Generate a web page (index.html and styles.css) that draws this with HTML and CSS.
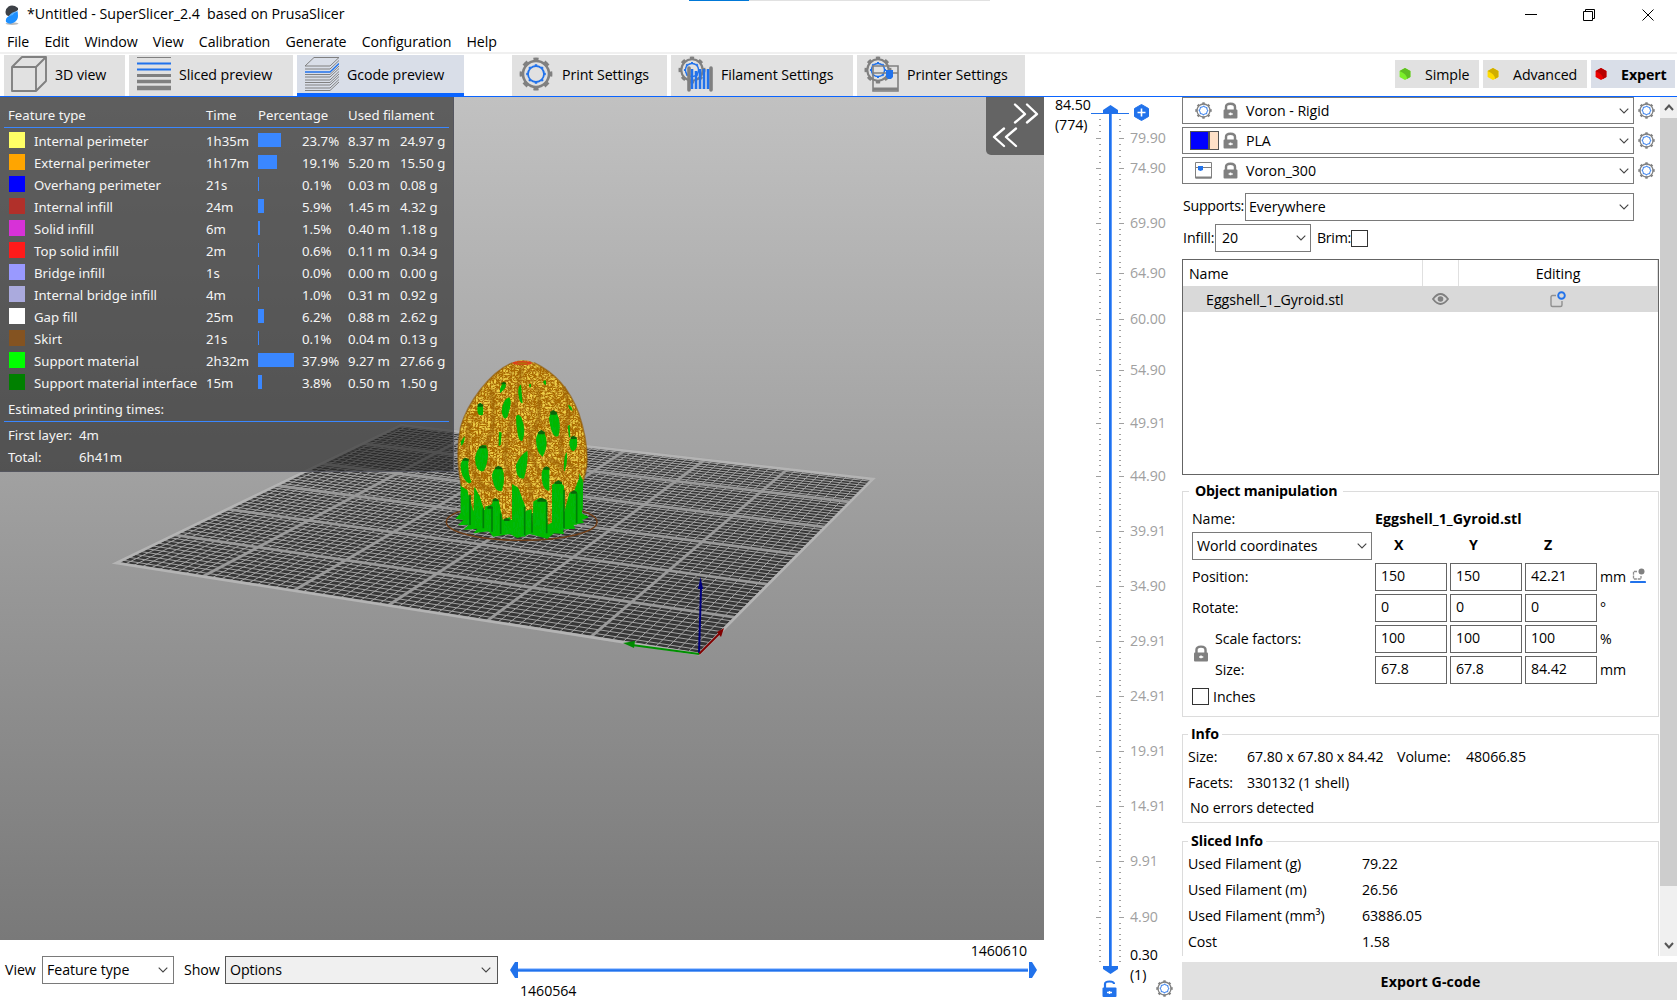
FILE: index.html
```html
<!DOCTYPE html>
<html lang="en">
<head>
<meta charset="utf-8">
<title>*Untitled - SuperSlicer_2.4 based on PrusaSlicer</title>
<link rel="stylesheet" href="styles.css">
</head>
<body>
<svg class="defs" aria-hidden="true">
  <symbol id="gear" viewBox="0 0 34 34">
    <circle cx="17" cy="17" r="13" fill="none" stroke="#808080" stroke-width="2.6"/>
    <circle cx="17" cy="17" r="14.4" fill="none" stroke="#808080" stroke-width="4" pathLength="16" stroke-dasharray="0.9 1.1" stroke-dashoffset="0.45"/>
    <circle cx="17" cy="17" r="8" fill="none" stroke="#2172eb" stroke-width="1.8"/>
    <circle cx="17" cy="17" r="9" fill="none" stroke="#2172eb" stroke-width="1.6" pathLength="16" stroke-dasharray="0.7 1.3" stroke-dashoffset="0.35"/>
  </symbol>
  <symbol id="lock" viewBox="0 0 16 18">
    <path d="M3.2 9V5.2Q3.2 1.7 8 1.7T12.8 5.2V9" fill="none" stroke="#808080" stroke-width="2.6"/>
    <rect x="0.6" y="8" width="14.8" height="9.4" rx="1" fill="#808080"/>
    <path d="M6 12.6h4.4M8 11v3" stroke="#fff" stroke-width="1.6"/>
  </symbol>
  <symbol id="chev" viewBox="0 0 10 6"><path d="M.7.7 5 5 9.3.7" fill="none" stroke="#444" stroke-width="1.1"/></symbol>
</svg>

<header class="titlebar">
  <svg class="logo" width="14" height="20" viewBox="0 0 14 20"><ellipse cx="7" cy="18.6" rx="6.5" ry="1.3" fill="#bbb"/><path d="M13 3Q8-1 3.500 1.500Q0 4 .6 8Q1 11 4 11L13 5Z" fill="#3d4147"/><path d="M12.500 6 4 11Q0 13 1 17Q5 20 9 17.500Q13 15 13 11Q13 8 12.500 6Z" fill="#1e90ff"/><path d="M4 11Q6 7 12.500 6Q8 7 8 10Z" fill="#55b0ff"/></svg>
  <span class="title">*Untitled - SuperSlicer_2.4&nbsp; based on PrusaSlicer</span>
  <div class="progress"><i></i></div>
  <svg class="winbtns" width="130" height="14" viewBox="0 0 130 14" fill="none" stroke="#000" stroke-width="1"><path d="M0 6.500h12M58.500 3.500h9v9h-9zM60.500 3.500v-2h9v9h-2M117.500 1.500l11 11m0-11-11 11"/></svg>
</header>
<nav class="menu"><span>File</span><span>Edit</span><span>Window</span><span>View</span><span>Calibration</span><span>Generate</span><span>Configuration</span><span>Help</span></nav>
<div class="tabs">
  <div class="tab t1"><svg width="36" height="36" viewBox="0 0 36 36" fill="none" stroke="#808080" stroke-width="1.900" stroke-linejoin="round"><path d="M1 11h24v24H1zM1 11 11 1h24L25 11M35 1v24L25 35"/></svg>3D view</div>
  <div class="tab t2"><svg width="34" height="36" viewBox="0 0 34 36"><path d="M0 1.500h34" stroke="#808080"/><path d="M0 7.500h34M0 13.500h34" stroke="#2172eb" stroke-width="2.200"/><path d="M0 19.500h34" stroke="#808080" stroke-width="3"/><path d="M0 25.500h34" stroke="#808080" stroke-width="3.600"/><path d="M0 32h34" stroke="#808080" stroke-width="4.500"/></svg>Sliced preview</div>
  <div class="tab t3 on"><svg width="34" height="36" viewBox="0 0 34 36" fill="none" stroke="#808080" stroke-width="1"><path d="M0 10h25L34 1.500H9z"/><path d="M0 13h25l9-8.500M0 18.500h25l9-8.500M0 21h25l9-8.500M0 24h25l9-8.500M0 26.500h25l9-8.500M0 29h25l9-8.500M0 32h25l9-8.500M0 34.500h25l9-8.500"/><path d="M0 16h25l9-8.500" stroke="#2172eb" stroke-width="1.300"/></svg>Gcode preview</div>
  <div class="tab t4"><svg width="34" height="34"><use href="#gear"/></svg>Print Settings</div>
  <div class="tab t5"><svg width="36" height="36" viewBox="0 0 36 36"><use href="#gear" width="28" height="28"/><path d="M11 12v22M33 12v22" stroke="#808080" stroke-width="3.600" stroke-linecap="round"/><path d="M14 13v20M18 15v18M22 13v20M26 13v20M30 13v20" stroke="#2172eb" stroke-width="2.600"/></svg>Filament Settings</div>
  <div class="tab t6"><svg width="36" height="36" viewBox="0 0 36 36"><use href="#gear" width="28" height="28"/><g fill="none" stroke="#808080" stroke-width="1.600"><path d="M9 10h25v25H9zM9 17h25"/><path d="M9 33h25" stroke-width="3"/></g><path d="M22 14h7v7l-2 2h-3l-2-2z" fill="#2172eb"/></svg>Printer Settings</div>
  <div class="modes">
    <div class="mode m1"><svg width="12" height="12" viewBox="0 0 12 12"><path d="M6 0 11.400 3v6L6 12 .6 9V3z" fill="#7df02a"/><path d="M6 0 11.400 3v6L8 11Q8 6 .6 3z" fill="#5fbf22"/></svg>Simple</div>
    <div class="mode m2"><svg width="12" height="12" viewBox="0 0 12 12"><path d="M6 0 11.400 3v6L6 12 .6 9V3z" fill="#ffdc00"/><path d="M6 0 11.400 3v6L8 11Q8 6 .6 3z" fill="#d0ae00"/></svg>Advanced</div>
    <div class="mode m3"><svg width="12" height="12" viewBox="0 0 12 12"><path d="M6 0 11.400 3v6L6 12 .6 9V3z" fill="#ea0000"/><path d="M6 0 11.400 3v6L8 11Q8 6 .6 3z" fill="#b80000"/></svg>Expert</div>
  </div>
</div>

<main class="work">
  <section class="left">
    <div class="view">
      <svg class="scene" width="1044" height="843" viewBox="0 97 1044 843">
        <defs>
          <filter id="threads" x="0" y="0" width="1" height="1">
            <feTurbulence type="turbulence" baseFrequency="0.11 0.14" numOctaves="2" seed="4"/>
            <feColorMatrix values="0 0 0 0 .86  0 0 0 0 .62  0 0 0 0 .06  2.6 0 0 0 -.35" result="n"/>
            <feComposite in="n" in2="SourceGraphic" operator="in" result="c"/>
            <feMerge><feMergeNode in="SourceGraphic"/><feMergeNode in="c"/></feMerge>
          </filter>
          <filter id="grain" x="0" y="0" width="1" height="1">
            <feTurbulence type="fractalNoise" baseFrequency="0.2 0.05" numOctaves="2" seed="9"/>
            <feColorMatrix values="0 0 0 0 0  0 0 0 0 .48  0 0 0 0 0  3 0 0 0 -1.400" result="n"/>
            <feComposite in="n" in2="SourceGraphic" operator="in" result="c"/>
            <feMerge><feMergeNode in="SourceGraphic"/><feMergeNode in="c"/></feMerge>
          </filter>
        </defs>
        <g id="bed"></g>
        <g transform="translate(430 340) scale(.33333)">
          <ellipse cx="275" cy="546" rx="226" ry="55" fill="none" stroke="#6e3d17" stroke-width="4.500"/>
          <path d="M92 430 92 520 76 536 100 540 84 556 116 554 100 570 142 566 130 580 176 574 190 590 240 582 262 594 300 582 352 596 372 580 402 582 398 568 436 566 430 554 462 548 456 540 476 532 456 520 460 420Z" fill="#00b905" filter="url(#grain)"/>
          <path filter="url(#threads)" fill="#ab6a06" d="M248 68Q278 54 312 68C380 100 420 150 446 220 466 280 474 330 470 380L458 430 448 410 432 455 418 458 402 520 400 440 385 422 368 440 370 545 352 555 350 480 330 474 310 485 308 560 300 520 284 515 262 440 246 435 246 540 236 535 218 540 206 480 195 475 182 498 162 510 150 470 134 440 130 515 112 450 95 440C82 380 80 320 92 262 112 190 180 95 248 68Z"/>
          <g fill="none" stroke="#9c6106" stroke-width="13" opacity=".5"><path d="M275 75Q270 150 240 260T245 420M185 150Q200 260 175 300T185 380M320 140Q340 230 310 270T330 400M120 250Q100 330 135 400T190 440M400 140Q430 220 400 280T440 390M270 400Q300 410 305 480M350 360Q390 360 400 400"/></g>
          <path d="M248 68C180 95 112 190 92 262 80 320 82 380 95 440M312 68C380 100 420 150 446 220 466 280 474 330 470 380L460 425" fill="none" stroke="#8f5a06" stroke-width="5" opacity=".6"/>
          <ellipse cx="277" cy="69" rx="30" ry="6" fill="#d9421a"/><ellipse cx="277" cy="70" rx="16" ry="3.500" fill="#b56a0c"/>
          <g fill="#00b808" filter="url(#grain)">
            <path d="M210 160Q208 138 222 128 232 134 224 146ZM265 160Q264 136 273 134 276 170 278 190 268 190 265 160ZM340 125q4-8 8-2v12q-6 0-8-10ZM298 132h5v10h-5ZM142 208Q142 192 152 190 164 200 158 225 142 230 142 208ZM215 215Q218 176 238 172 248 190 232 230 222 246 215 215ZM258 230Q264 218 274 232 290 270 277 302 262 310 258 230ZM357 235Q362 206 380 218 396 250 385 288 366 300 357 235ZM318 300Q324 262 342 276 360 310 338 350 320 340 318 300ZM418 305Q424 284 440 294 446 325 430 334 418 330 418 305ZM92 305 104 288Q104 310 94 318ZM135 355Q142 315 168 316 182 350 162 392 138 402 135 355ZM92 375Q96 350 116 358 112 400 124 425 116 438 102 415 92 400 92 375ZM186 405Q194 374 216 384 228 410 216 452 192 460 186 405ZM258 375Q270 345 292 332 296 365 282 415 258 420 258 375ZM335 400Q340 376 358 384V452Q334 450 335 400ZM402 390Q400 350 410 336 414 370 404 394ZM207 275 215 278 212 315 206 318ZM413 258l6-4 2 38h-4ZM414 194l10 6 4 14-10-8Z"/>
            <path d="M94 438 112 462 122 515V560L94 530ZM133 440 150 480 158 560H132ZM165 500 185 494 184 575 168 565ZM188 478 205 480 212 580 188 578ZM246 432 266 446 286 500V590L246 582ZM311 485 328 474 348 480 354 585 311 575ZM366 435 384 422 402 438V570L366 580ZM420 458 440 452V555L418 550ZM448 400 458 420V510L444 515ZM288 512 305 508V570H288ZM220 538 240 532 244 580H220Z"/>
          </g>
          <g fill="#0b650b"><path d="M142 194l8-5 10 5-2 6h-14ZM360 216l10-6 12 8-4 6h-16ZM324 277l10-7 12 8-4 5h-18ZM147 321l10-6 12 4v6h-22ZM98 357l8-4 10 4v5H98ZM195 383l10-6 12 6v5h-22ZM340 384l10-5 8 5v5h-18ZM322 480l12-7 14 6v6h-26ZM374 427l12-6 10 6v5h-22ZM422 456l10-5 9 5v5h-19ZM422 292l8-5 10 5v5h-18ZM188 479l8-5 9 5v5h-17ZM172 501l8-4 9 4v5h-17ZM222 538l8-4 9 4v5h-17ZM214 129l8-4 6 4v4h-14Z"/><path d="M120 465v90M160 505v60M186 500v75M212 520v62M284 500v85M306 520v58M350 485v95M402 450v115M440 460v90" stroke="#007d08" stroke-width="5"/></g>
        </g>
        <g stroke-width="2" fill="none"><path d="M699 654 701 588" stroke="#000080"/><path d="M699 654 720 633" stroke="#800000"/><path d="M699 654 632 645" stroke="#009000"/></g>
        <path d="M698 589 700.500 577 703 589Z" fill="#000080"/><path d="M717 632 724 628 721 637Z" fill="#800000"/><path d="M635 641 623 643 634 648Z" fill="#008a00"/>
      </svg>
      <div class="legend">
        <div class="lhead"><span>Feature type</span><span>Time</span><span>Percentage</span><span>Used filament</span></div>
        <div id="rows" class="lrows"></div>
        <div class="lest">Estimated printing times:</div>
        <div class="ltimes"><span>First layer:</span><span>4m</span><span>Total:</span><span>6h41m</span></div>
      </div>
      <div class="collapse"><svg width="54" height="58" viewBox="0 0 54 58" fill="none" stroke="#fff" stroke-width="2.300" stroke-linecap="round" stroke-linejoin="round"><path d="M29 8.500 39 18 29 26.500M41 8.500 51 18 41 26.500M18 32.500 8 41 18 50M30 32.500 20 41 30 50"/></svg></div>
    </div>
    <div class="bottom">
      <span class="lbl v">View</span><div class="select s1">Feature type<svg width="10" height="6"><use href="#chev"/></svg></div>
      <span class="lbl s">Show</span><div class="select s2">Options<svg width="10" height="6"><use href="#chev"/></svg></div>
      <div class="hslider"><span class="hi">1460610</span><svg width="527" height="16" viewBox="0 0 527 16"><path d="M8 6.500h510v3H8z" fill="#5a9aff"/><path d="M8 7.500h510v2H8z" fill="#2172eb"/><path d="M8 0v16H5L0 8 5 0ZM519 0v16h3l5-8-5-8Z" fill="#2172eb"/></svg><span class="lo">1460564</span></div>
    </div>
  </section>

  <section class="vslider">
    <svg width="138" height="903" viewBox="1044 97 138 903">
      <g id="ticks" stroke="#a0a0a0" stroke-width="1"></g>
      <path d="M1109 113h3v853h-3z" fill="#5a9aff"/><path d="M1109 113h2v853h-2z" fill="#2172eb"/>
      <path d="M1091 113.500h38" stroke="#2172eb"/><path d="M1103 113v-3l7.500-5 7.500 5v3ZM1103 966v3l7.500 5 7.500-5v-3Z" fill="#2172eb"/>
      <path d="M1141.500 104.500l7 4v8l-7 4-7-4v-8Z" fill="#2172eb" stroke="#2172eb" stroke-linejoin="round"/><path d="M1137.500 112.500h8M1141.500 108.500v8" stroke="#fff" stroke-width="1.600"/>
      <path d="M1105 988v-4q0-2.500 4.500-2.500t4.500 2.500" fill="none" stroke="#2172eb" stroke-width="2.200"/><rect x="1102.500" y="987.500" width="14" height="9.500" rx="1" fill="#2172eb"/><path d="M1107 992.500h5M1109.500 991v3" stroke="#fff" stroke-width="1.400"/>
      <use href="#gear" x="1156" y="980" width="17" height="17"/>
      <g id="marks" class="marks"></g>
      <g class="ends"><text x="1055" y="110">84.50</text><text x="1055" y="130">(774)</text><text x="1130" y="960">0.30</text><text x="1130" y="980">(1)</text></g>
    </svg>
  </section>

  <aside class="panel">
    <div class="scroll">
      <div class="content">
        <div class="preset"><div class="select"><svg class="pi" width="17" height="17"><use href="#gear"/></svg><svg class="lk" width="15" height="17"><use href="#lock"/></svg>Voron - Rigid<svg width="10" height="6"><use href="#chev"/></svg></div><svg width="17" height="17"><use href="#gear"/></svg></div>
        <div class="preset"><div class="select"><i class="swatches"><b></b></i><svg class="lk" width="15" height="17"><use href="#lock"/></svg>PLA<svg width="10" height="6"><use href="#chev"/></svg></div><svg width="17" height="17"><use href="#gear"/></svg></div>
        <div class="preset"><div class="select"><svg class="pi" width="17" height="17" viewBox="0 0 17 17"><path d="M.5.5h16v15.500H.5zM.5 5.500h16" fill="none" stroke="#808080"/><path d="M.5 15.500h16" stroke="#808080" stroke-width="2"/><path d="M3 4h5v4L5.500 9 3 8z" fill="#2172eb"/></svg><svg class="lk" width="15" height="17"><use href="#lock"/></svg>Voron_300<svg width="10" height="6"><use href="#chev"/></svg></div><svg width="17" height="17"><use href="#gear"/></svg></div>
        <div class="line sup"><span>Supports:</span><div class="select">Everywhere<svg width="10" height="6"><use href="#chev"/></svg></div></div>
        <div class="line inf"><span class="a">Infill:</span><div class="select">20<svg width="10" height="6"><use href="#chev"/></svg></div><span class="b">Brim:</span><i class="check"></i></div>
        <div class="list">
          <div class="lh"><span>Name</span><span></span><span>Editing</span></div>
          <div class="lr"><span>Eggshell_1_Gyroid.stl</span>
            <span><svg width="17" height="12" viewBox="0 0 17 12"><path d="M1 6Q8.500-4 16 6 8.500 16 1 6Z" fill="none" stroke="#808080" stroke-width="1.800"/><circle cx="8.500" cy="6" r="2.800" fill="#808080"/></svg></span>
            <span><svg width="16" height="17" viewBox="0 0 16 17" fill="none"><path d="M6 4.500H2.500q-1.500 0-1.500 1.500v8q0 1.500 1.500 1.500h8q1.500 0 1.500-1.500V10" stroke="#909090" stroke-width="1.400"/><circle cx="11.500" cy="4.500" r="3.300" stroke="#2172eb" stroke-width="1.900"/></svg></span></div>
        </div>
        <fieldset class="obj"><legend>Object manipulation</legend>
          <div class="name"><span>Name:</span><b>Eggshell_1_Gyroid.stl</b></div>
          <div class="coords"><div class="select">World coordinates<svg width="10" height="6"><use href="#chev"/></svg></div><b>X</b><b>Y</b><b>Z</b></div>
          <div class="mrow"><span>Position:</span><i>150</i><i>150</i><i>42.21</i><em>mm</em><svg width="16" height="16" viewBox="0 0 16 16" fill="none"><path d="M7 3.500H3.500V11H11V8" stroke="#909090" stroke-width="1.300" stroke-dasharray="3 .8"/><circle cx="11.500" cy="3.500" r="3" fill="#808080"/><path d="M1 14h14" stroke="#2172eb" stroke-width="2.200" stroke-linecap="round"/></svg></div>
          <div class="mrow"><span>Rotate:</span><i>0</i><i>0</i><i>0</i><em>°</em></div>
          <div class="mrow in"><span>Scale factors:</span><i>100</i><i>100</i><i>100</i><em>%</em></div>
          <div class="mrow in"><span>Size:</span><i>67.8</i><i>67.8</i><i>84.42</i><em>mm</em></div>
          <svg class="sizelock" width="16" height="17"><use href="#lock"/></svg>
          <div class="inches"><i class="check"></i>Inches</div>
        </fieldset>
        <fieldset class="info"><legend>Info</legend>
          <div><span>Size:</span><span>67.80 x 67.80 x 84.42</span><span>Volume:</span><span>48066.85</span></div>
          <div><span>Facets:</span><span>330132 (1 shell)</span></div>
          <p>No errors detected</p>
        </fieldset>
        <fieldset class="sliced"><legend>Sliced Info</legend>
          <div><span>Used Filament (g)</span><span>79.22</span></div>
          <div><span>Used Filament (m)</span><span>26.56</span></div>
          <div><span>Used Filament (mm³)</span><span>63886.05</span></div>
          <div><span>Cost</span><span>1.58</span></div>
        </fieldset>
      </div>
      <div class="sbar"><svg width="10" height="7" viewBox="0 0 10 7"><path d="M1 6 5 1.500 9 6" fill="none" stroke="#555" stroke-width="2"/></svg><i></i><svg width="10" height="7" viewBox="0 0 10 7"><path d="M1 1 5 5.500 9 1" fill="none" stroke="#555" stroke-width="2"/></svg></div>
    </div>
    <div class="export">Export G-code</div>
  </aside>
</main>
<script src="app.js"></script>
</body>
</html>
```
FILE: styles.css
```css
* { box-sizing: border-box; }
body { margin: 0; width: 1677px; height: 1000px; overflow: hidden; background: #fff; color: #000;
  font: 14.2px/20px "Open Sans", "Noto Sans", sans-serif; letter-spacing: -0.07px; display: flex; flex-direction: column; }
i, em { font-style: normal; }
svg { display: block; flex: none; }
.defs { position: absolute; width: 0; height: 0; }
span, b { white-space: nowrap; }

.titlebar { height: 29px; display: flex; align-items: center; padding-left: 5px; position: relative; }
.title { margin-left: 8px; margin-top: -1px; letter-spacing: -0.02px; }
.progress { position: absolute; left: 689px; top: 0; width: 301px; height: 1px; background: #e1e1e1; }
.progress i { display: block; width: 60px; height: 1px; background: #0078d7; }
.winbtns { margin: 0 22px 0 auto; }
.menu { height: 25px; display: flex; border-bottom: 2px solid #f0f0f0; padding: 3px 0 0 7px; gap: 15.2px; }
.tabs { height: 43px; padding: 1px 2px 0 4px; display: flex; border-bottom: 1px solid #0a64ff; }
.tab { height: 41px; background: #e1e1e1; display: flex; align-items: center; padding: 0 0 1px 7px; margin-right: 4px; }
.tab svg { margin: 0 8px 2px 0; }
.t1 { width: 121px; } .t2 { width: 164px; padding-left: 8px; } .t3 { width: 167px; padding-left: 8px; margin-right: 48px; }
.t4 { width: 155px; } .t4 svg { margin-right: 9px; } .t5 { width: 182px; } .t5 svg, .t6 svg { margin-right: 7px; } .t6 { width: 168px; }
.tab.on { background: #d9dee8; box-shadow: inset 0 -3px #0a64ff; }
.modes { margin-left: auto; display: flex; gap: 4px; padding-top: 5px; }
.mode { height: 28px; background: #e1e1e1; display: flex; align-items: center; padding: 1px 0 0 4px; }
.mode svg { margin: 0 14px 1px 0; }
.m1 { width: 84px; } .m2 { width: 104px; } .m3 { width: 84px; background: #d9dee8; font-weight: 700; }

.work { flex: 1; display: flex; min-height: 0; }
.left { width: 1044px; display: flex; flex-direction: column; }
.view { height: 843px; position: relative; background: linear-gradient(#c1c1c1, #797979); }
.legend { position: absolute; left: 0; top: 0; width: 454px; height: 375px; background: rgba(37,37,37,.63); color: #f5f5f5;
  font: 13.2px/22px "Noto Sans", sans-serif; letter-spacing: 0; padding: 7px 4px 0; border-right: 1px solid #55565f; border-bottom: 1px solid #55565f; }
.lhead { display: grid; grid-template-columns: 198px 52px 90px 1fr; padding-left: 4px; height: 24px; border-bottom: 1px solid #3a87ff; }
.lrows { padding: 1px 0 0 5px; }
.lrow { height: 22px; display: grid; grid-template-columns: 25px 172px 52px 44px 46px 52px 1fr; line-height: 24px; }
.sw { width: 16px; height: 16px; margin-top: 3px; }
.bar { height: 14px; margin-top: 4px; background: #3a87ff; }
.lest { height: 24px; margin-top: 5px; padding-left: 4px; border-bottom: 1px solid #3a87ff; }
.ltimes { display: grid; grid-template-columns: 71px 1fr; padding: 2px 0 0 4px; }
.collapse { position: absolute; right: 0; top: 0; width: 58px; height: 58px; background: #646464; border-bottom-left-radius: 5px; }
.collapse svg { margin-top: -1px; }

.select { height: 28px; border: 1px solid #7a7a7a; background: #fff; display: flex; align-items: center; padding: 0 9px 0 4px; white-space: nowrap; }
.select > svg:last-child { margin-left: auto; }
.bottom { flex: 1; display: flex; align-items: center; }
.lbl { margin-top: -1px; }
.v { width: 42px; padding-left: 5px; } .s { width: 51px; padding-left: 10px; }
.s1 { width: 132px; } .s2 { width: 273px; background: #f0f0f0; border-color: #555; padding-right: 6px; }
.s1 { padding-right: 5px; }
.hslider { margin-left: 12px; width: 527px; height: 60px; display: flex; flex-direction: column; padding-top: 1px; }
.hslider svg { margin: 1px 0 3px; }
.hi { align-self: flex-end; margin-right: 10px; }
.lo { margin-left: 10px; }
.vslider { width: 138px; }
.vslider svg { overflow: visible; }
.vslider text { font-size: 14.2px; }
.marks { fill: #a0a0a0; }

.panel { width: 495px; display: flex; flex-direction: column; }
.scroll { height: 859px; display: flex; overflow: hidden; }
.content { width: 478px; padding-right: 1px; }
.preset { display: flex; align-items: center; height: 27px; margin-bottom: 3px; }
.preset .select { width: 452px; height: 27px; margin-right: 4px; padding: 0 4px 0 12px; }
.preset .select > svg:last-child, .sup .select > svg:last-child { margin-right: 0; }
.pi { margin-right: 11px; } .lk { margin-right: 8px; }
.swatches { width: 29px; height: 19px; margin: 0 4px 0 -5px; border: 1px solid #555; background: #ffe1c8; flex: none; }
.swatches b { display: block; width: 19px; height: 17px; background: #00f; border-right: 2px solid #555; }
.line { display: flex; align-items: center; height: 28px; padding-left: 1px; }
.sup { margin-top: 9px; } .sup span { width: 62px; margin-top: -2px; letter-spacing: -.3px; } .sup .select { width: 389px; padding-right: 4px; padding-left: 3px; }
.inf { margin-top: 3px; } .inf .a { width: 32px; margin-top: -1px; } .inf .select { width: 96px; padding: 0 4px 0 6px; }
.inf .b { width: 40px; padding-left: 6px; letter-spacing: -.3px; }
.check { width: 17px; height: 17px; border: 1px solid #333; flex: none; }
.list { height: 216px; margin-top: 7px; border: 1px solid #646464; }
.lh, .lr { height: 26px; display: grid; grid-template-columns: 240px 36px 199px; align-items: center; }
.lh span { height: 26px; border-right: 1px solid #e0e0e0; line-height: 28px; }
.lh span:first-child { padding-left: 6px; } .lh span:last-child { text-align: center; }
.lr { background: #d9d9d9; } .lr span:first-child { padding: 2px 0 0 23px; letter-spacing: 0; } .lr svg { margin: 0 auto; position: relative; left: -1px; }
fieldset { margin: 0; padding: 0; border: 1px solid #dcdcdc; min-width: 0; position: relative; }
legend { font-weight: 700; height: 20px; padding: 0 3px; margin-left: 5px; letter-spacing: -.1px; }
.obj { height: 236px; margin-top: 6px; }
.obj legend { padding: 0 6px; margin-left: 6px; letter-spacing: -.2px; }
.name { display: flex; height: 30px; padding: 8px 0 0 9px; } .name span { width: 183px; } .name b { letter-spacing: .05px; }
.coords { display: flex; height: 31px; padding: 1px 0 0 9px; }
.coords .select { width: 180px; padding: 0 4px 0 4px; margin-right: 3px; } .coords b { width: 75px; padding-left: 19px; margin-top: 3px; }
.mrow { display: flex; padding-left: 9px; height: 31px; padding-top: 1px; }
.mrow span { width: 183px; padding-top: 4px; } .mrow.in span { padding-left: 23px; }
.mrow i { width: 72px; height: 28px; border: 1px solid #646464; margin-right: 3px; padding: 2px 0 0 5px; }
.mrow em { padding-top: 4px; width: 30px; } .mrow svg { margin-top: 5px; }
.sizelock { position: absolute; left: 10px; top: 144px; }
.inches { display: flex; align-items: center; height: 19px; padding-left: 9px; gap: 4px; margin-top: 1px; }
.info { height: 99px; margin-top: 7px; } .info div { display: flex; height: 26px; padding-left: 5px; margin-top: 0; }
.info legend + div { margin-top: 3px; }
.info div span:nth-child(1) { width: 59px; } .info div span:nth-child(2) { width: 150px; } .info div span:nth-child(3) { width: 69px; }
.info p { margin: -1px 0 0; padding-left: 7px; }
.sliced { height: 150px; margin-top: 8px; } .sliced div { display: flex; height: 26px; padding-left: 5px; } .sliced legend + div { margin-top: 3px; }
.sliced div span:first-child { width: 174px; }
.sbar { width: 17px; background: #f0f0f0; display: flex; flex-direction: column; align-items: center; padding: 7px 0; }
.sbar i { width: 17px; height: 768px; background: #cdcdcd; margin: 7px 0 auto; }
.export { margin-top: 6px; height: 38px; background: #e1e1e1; font-weight: 700; text-align: center; line-height: 40px; padding-left: 2px; letter-spacing: .1px; }
```
FILE: app.js
```js
// Feature legend: colour, name, time, bar width, percentage, metres, grams
const features = [
  ['#ffff66', 'Internal perimeter', '1h35m', 23, '23.7%', '8.37 m', '24.97 g'],
  ['#ffa500', 'External perimeter', '1h17m', 18.5, '19.1%', '5.20 m', '15.50 g'],
  ['#0000ff', 'Overhang perimeter', '21s', 1, '0.1%', '0.03 m', '0.08 g'],
  ['#b1302a', 'Internal infill', '24m', 6, '5.9%', '1.45 m', '4.32 g'],
  ['#d732d7', 'Solid infill', '6m', 2, '1.5%', '0.40 m', '1.18 g'],
  ['#ff1a1a', 'Top solid infill', '2m', 1, '0.6%', '0.11 m', '0.34 g'],
  ['#9999ff', 'Bridge infill', '1s', 1, '0.0%', '0.00 m', '0.00 g'],
  ['#aaaadd', 'Internal bridge infill', '4m', 1, '1.0%', '0.31 m', '0.92 g'],
  ['#ffffff', 'Gap fill', '25m', 6, '6.2%', '0.88 m', '2.62 g'],
  ['#845321', 'Skirt', '21s', 1, '0.1%', '0.04 m', '0.13 g'],
  ['#00ff00', 'Support material', '2h32m', 36, '37.9%', '9.27 m', '27.66 g'],
  ['#008000', 'Support material interface', '15m', 4, '3.8%', '0.50 m', '1.50 g']
];
document.getElementById('rows').innerHTML = features.map(f =>
  `<div class="lrow"><i class="sw" style="background:${f[0]}"></i><span>${f[1]}</span><span>${f[2]}</span>` +
  `<i class="bar" style="width:${f[3]}px"></i><span>${f[4]}</span><span>${f[5]}</span><span>${f[6]}</span></div>`).join('');

// Print bed: unit square projected onto the four bed corners
const [A, B, C, D] = [[116, 563], [699, 654], [873, 479], [401, 425]];
const dx1 = B[0] - C[0], dx2 = D[0] - C[0], sx = A[0] - B[0] + C[0] - D[0];
const dy1 = B[1] - C[1], dy2 = D[1] - C[1], sy = A[1] - B[1] + C[1] - D[1];
const det = dx1 * dy2 - dx2 * dy1;
const g = (sx * dy2 - dx2 * sy) / det, h = (dx1 * sy - sx * dy1) / det;
const pt = (u, v) => {
  const w = g * u + h * v + 1;
  const x = ((B[0] - A[0] + g * B[0]) * u + (D[0] - A[0] + h * D[0]) * v + A[0]) / w;
  const y = ((B[1] - A[1] + g * B[1]) * u + (D[1] - A[1] + h * D[1]) * v + A[1]) / w;
  return x.toFixed(2) + ' ' + y.toFixed(2);
};
let minor = '', major = '';
for (let i = 0; i <= 60; i++) {
  const t = i / 60;
  const d = `M${pt(t, 0)}L${pt(t, 1)}M${pt(0, t)}L${pt(1, t)}`;
  if (i % 10) minor += d; else major += d;
}
const outline = `M${pt(0, 0)}L${pt(1, 0)}L${pt(1, 1)}L${pt(0, 1)}Z`;
document.getElementById('bed').innerHTML =
  `<path d="${outline}" fill="#363636"/><path d="${minor}" stroke="#a4a4a4" stroke-width="1"/>` +
  `<path d="${major}" stroke="#9a9a9a" stroke-width="2.8"/><path d="${outline}" fill="none" stroke="#b4b4b4" stroke-width="2.6"/>`;

// Layer slider scale
const marks = [['79.90', 138], ['74.90', 168], ['69.90', 223], ['64.90', 273], ['60.00', 319], ['54.90', 370], ['49.91', 423],
  ['44.90', 476], ['39.91', 531], ['34.90', 586], ['29.91', 641], ['24.91', 696], ['19.91', 751], ['14.91', 806], ['9.91', 861], ['4.90', 917]];
let ticks = 'M1099 119.500h2M1119 119.500h2M1099 125.500h2M1119 125.500h2M1099 131.500h2M1119 131.500h2';
marks.forEach(([, y], i) => {
  ticks += `M1096 ${y + .5}h5M1119 ${y + .5}h5`;
  const next = i + 1 < marks.length ? marks[i + 1][1] : 972;
  const n = Math.round((next - y) / 5.5);
  for (let k = 1; k < n; k++) {
    const ty = Math.round(y + (next - y) * k / n) + .5;
    if (ty < 967) ticks += `M1099 ${ty}h2M1119 ${ty}h2`;
  }
});
document.getElementById('ticks').innerHTML = `<path d="${ticks}"/>`;
document.getElementById('marks').innerHTML = marks.map(([t, y]) => `<text x="1130" y="${y + 5}">${t}</text>`).join('');
```
